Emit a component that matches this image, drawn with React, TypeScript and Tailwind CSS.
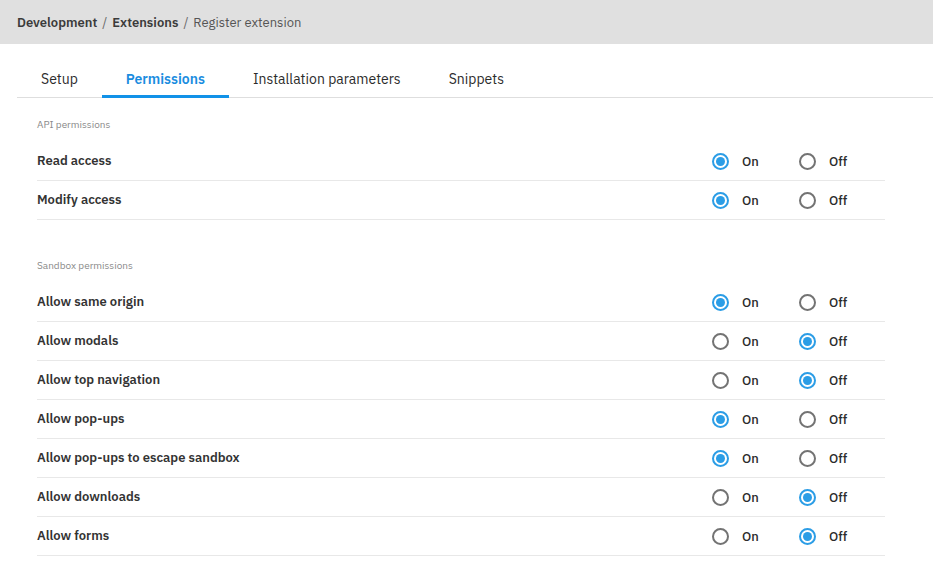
import { useState } from 'react';

type Perm = { label: string; on: boolean };

const apiPerms: Perm[] = [
  { label: "Read access", on: true },
  { label: "Modify access", on: true },
];

const sandboxPerms: Perm[] = [
  { label: "Allow same origin", on: true },
  { label: "Allow modals", on: false },
  { label: "Allow top navigation", on: false },
  { label: "Allow pop-ups", on: true },
  { label: "Allow pop-ups to escape sandbox", on: true },
  { label: "Allow downloads", on: false },
  { label: "Allow forms", on: false },
];

const tabs = ["Setup", "Permissions", "Installation parameters", "Snippets"];

function Radio({ checked, label, onClick }: { checked: boolean; label: string; onClick: () => void }) {
  return (
    <button onClick={onClick} className="flex items-center gap-[13px] h-full">
      {checked ? (
        <span className="w-[17px] h-[17px] rounded-full border-2 border-[#2b9de6] flex items-center justify-center">
          <span className="w-[9px] h-[9px] rounded-full bg-[#2b9de6]" />
        </span>
      ) : (
        <span className="w-[17px] h-[17px] rounded-full border-2 border-[#737373]" />
      )}
      <span className="text-[13px] font-medium text-[#2b2b2b]">{label}</span>
    </button>
  );
}

function PermRow({ perm }: { perm: Perm }) {
  const [on, setOn] = useState(perm.on);
  return (
    <div className="flex items-center h-[39px] border-b border-[#e8e8e8]">
      <span className="flex-1 text-[13px] font-semibold text-[#333]">{perm.label}</span>
      <div className="flex items-center w-[173px] pt-px">
        <div className="w-[87px]">
          <Radio checked={on} label="On" onClick={() => setOn(true)} />
        </div>
        <Radio checked={!on} label="Off" onClick={() => setOn(false)} />
      </div>
    </div>
  );
}

function Section({ title, perms }: { title: string; perms: Perm[] }) {
  return (
    <div className="mb-[40px]">
      <div className="text-[10px] text-[#8a8a8a] leading-[12px] mb-[11px]">{title}</div>
      {perms.map((p) => (
        <PermRow key={p.label} perm={p} />
      ))}
    </div>
  );
}

export default function App() {
  const [active, setActive] = useState("Permissions");

  return (
    <div className="min-h-screen bg-white" style={{ fontFamily: '"IBM Plex Sans", "Noto Sans", sans-serif' }}>
      {/* Breadcrumb */}
      <div className="h-[44px] bg-[#e0e0e0] flex items-center px-[17px] pt-[2px] text-[13px] text-[#4a4a4a]">
        <span className="font-semibold text-[#3b3b3b]">Development</span>
        <span className="mx-[5px] text-[#6a6a6a]">/</span>
        <span className="font-semibold text-[#3b3b3b]">Extensions</span>
        <span className="mx-[5px] text-[#6a6a6a]">/</span>
        <span className="text-[#555]">Register extension</span>
      </div>

      {/* Tabs */}
      <div className="ml-[17px] mt-[16px] flex border-b border-[#dedede] h-[38px]">
        {tabs.map((t) => (
          <button
            key={t}
            onClick={() => setActive(t)}
            className={
              t === active
                ? "px-[24px] pt-[4px] text-[14px] font-semibold text-[#1a8ddf] border-b-[3px] border-[#1192e8] -mb-px"
                : "px-[24px] pt-[4px] text-[14px] text-[#2b2b2b] border-b-[3px] border-transparent -mb-px"
            }
          >
            {t}
          </button>
        ))}
      </div>

      {/* Content */}
      <div className="ml-[37px] w-[848px] pt-[21px]">
        <Section title="API permissions" perms={apiPerms} />
        <Section title="Sandbox permissions" perms={sandboxPerms} />
      </div>
    </div>
  );
}
